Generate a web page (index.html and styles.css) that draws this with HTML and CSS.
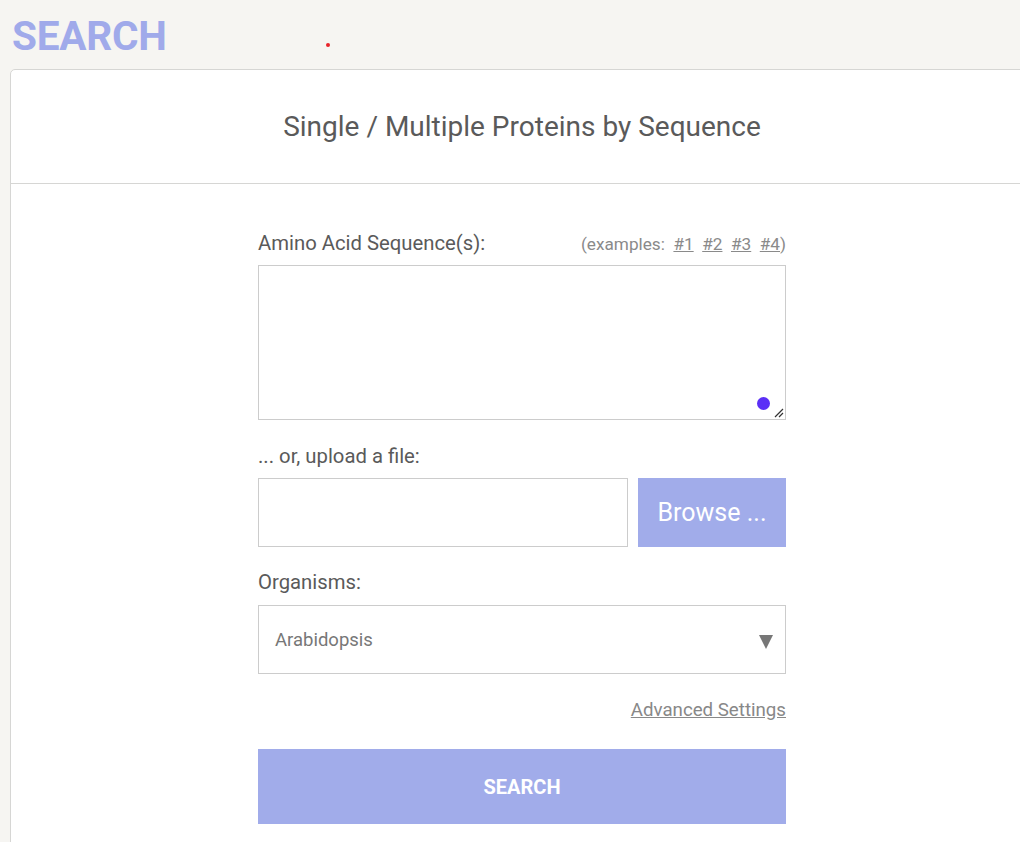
FILE: index.html
```html
<!DOCTYPE html>
<html>
<head>
<meta charset="utf-8">
<link rel="stylesheet" href="styles.css">
</head>
<body>
<header class="top">
  <h1 class="page-title">SEARCH</h1>
  <span class="red-dot"></span>
</header>
<section class="card">
  <div class="card-head">
    <h2 class="card-title">Single / Multiple Proteins by Sequence</h2>
  </div>
  <div class="card-body">
    <form class="form">
      <div class="label-row">
        <label class="label">Amino Acid Sequence(s):</label>
        <span class="examples">(examples:&nbsp; <a>#1</a>&nbsp; <a>#2</a>&nbsp; <a>#3</a>&nbsp; <a>#4</a>)</span>
      </div>
      <div class="textarea-wrap">
        <div class="textarea"></div>
        <span class="purple-dot"></span>
        <svg class="grip" width="12" height="12" viewBox="0 0 12 12"><path d="M11 3 L3 11 M11 7 L7 11" stroke="#333" stroke-width="1.2" fill="none"/></svg>
      </div>
      <label class="label label-upload">... or, upload a file:</label>
      <div class="upload-row">
        <div class="file-input"></div>
        <div class="browse">Browse ...</div>
      </div>
      <label class="label label-org">Organisms:</label>
      <div class="select">
        <span class="select-text">Arabidopsis</span>
        <span class="arrow"></span>
      </div>
      <div class="adv-row"><a class="adv">Advanced Settings</a></div>
      <div class="search-btn">SEARCH</div>
    </form>
  </div>
</section>
</body>
</html>
```

FILE: styles.css
```css
html, body {
  margin: 0;
  padding: 0;
}
body {
  background: #f6f5f2;
  font-family: Roboto, "Liberation Sans", sans-serif;
  overflow: hidden;
  width: 1020px;
  height: 842px;
}
.top {
  height: 69px;
  position: relative;
}
.page-title {
  margin: 0;
  padding: 12px 0 0 12px;
  font-size: 40.5px;
  font-weight: 700;
  line-height: 48px;
  color: #a0aaea;
  letter-spacing: -0.2px;
}
.red-dot {
  position: absolute;
  left: 326px;
  top: 43px;
  width: 4px;
  height: 4px;
  border-radius: 50%;
  background: #e8232a;
}
.card {
  margin-left: 10px;
  width: 1024px;
  background: #fff;
  border: 1px solid #d6d6d4;
  border-radius: 5px 0 0 0;
  height: 800px;
  box-sizing: border-box;
}
.card-head {
  height: 113px;
  border-bottom: 1px solid #d6d6d4;
  display: flex;
  align-items: center;
  justify-content: center;
}
.card-title {
  margin: 0;
  font-weight: 400;
  font-size: 28px;
  color: #5a5a5a;
}
.card-body {
  display: flex;
  justify-content: center;
  padding-top: 47px;
}
.form {
  width: 528px;
  display: flex;
  flex-direction: column;
}
.label-row {
  display: flex;
  justify-content: space-between;
  align-items: baseline;
  height: 24px;
  margin-bottom: 10px;
}
.label {
  font-size: 20.3px;
  color: #5a5a5a;
  line-height: 24px;
}
.label-upload {
  margin-top: 24px;
  margin-bottom: 10px;
}
.label-org {
  margin-top: 23px;
  margin-bottom: 11px;
}
.examples {
  font-size: 17.2px;
  color: #8a8a8a;
}
.examples a {
  color: #8a8a8a;
  text-decoration: underline;
}
.textarea-wrap {
  position: relative;
  height: 155px;
}
.textarea {
  height: 155px;
  border: 1px solid #ccc;
  box-sizing: border-box;
}
.purple-dot {
  position: absolute;
  left: 499px;
  top: 132px;
  width: 13px;
  height: 13px;
  border-radius: 50%;
  background: #5b2ff6;
}
.grip {
  position: absolute;
  right: 2px;
  bottom: 2px;
}
.upload-row {
  display: flex;
  gap: 10px;
  height: 69px;
}
.file-input {
  width: 370px;
  border: 1px solid #ccc;
  box-sizing: border-box;
}
.browse {
  flex: 1;
  background: #a1acea;
  color: #fff;
  font-size: 25px;
  display: flex;
  align-items: center;
  justify-content: center;
}
.select {
  height: 69px;
  border: 1px solid #ccc;
  box-sizing: border-box;
  display: flex;
  align-items: center;
  justify-content: space-between;
  padding: 0 12px 0 16px;
}
.select-text {
  font-size: 18.5px;
  color: #777;
}
.arrow {
  width: 0;
  height: 0;
  border-left: 7px solid transparent;
  border-right: 7px solid transparent;
  border-top: 14px solid #777;
  margin-top: 4px;
}
.adv-row {
  display: flex;
  justify-content: flex-end;
  margin-top: 24px;
  height: 24px;
}
.adv {
  font-size: 18.7px;
  color: #888;
  text-decoration: underline;
  line-height: 24px;
}
.search-btn {
  margin-top: 27px;
  height: 75px;
  background: #a1acea;
  color: #fff;
  font-weight: 700;
  font-size: 20px;
  display: flex;
  align-items: center;
  justify-content: center;
}
```
